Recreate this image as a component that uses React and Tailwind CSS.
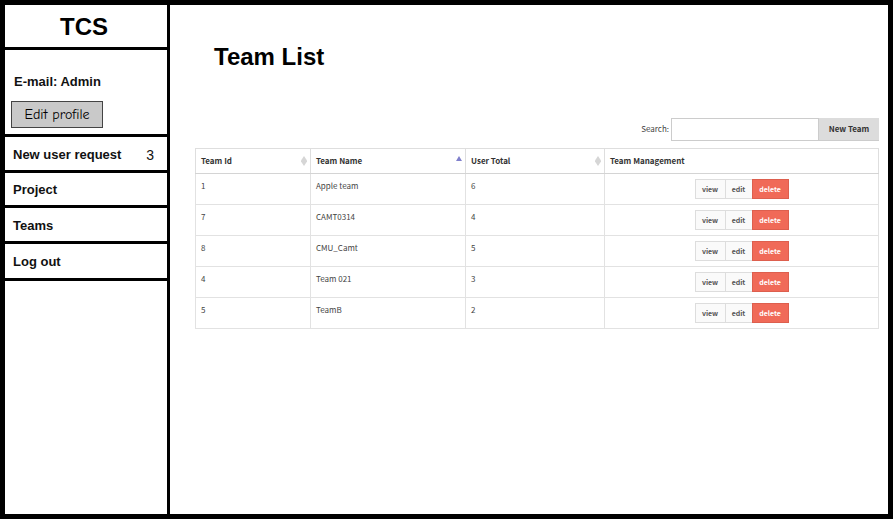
import React from "react";

const teams = [
  { id: 1, name: "Apple team", total: 6 },
  { id: 7, name: "CAMT0314", total: 4 },
  { id: 8, name: "CMU_Camt", total: 5 },
  { id: 4, name: "Team 021", total: 3 },
  { id: 5, name: "TeamB", total: 2 },
];

const links = [
  { label: "New user request", count: 3, height: "h-9" },
  { label: "Project", height: "h-[35px]" },
  { label: "Teams", height: "h-9" },
  { label: "Log out", height: "h-[37px]" },
];

function SortIcon({ active }) {
  return (
    <svg viewBox="0 0 6 10" className="h-[10px] w-[6px]" aria-hidden="true">
      {active ? (
        <path d="M3 0 6 5H0Z" fill="#8080cc" />
      ) : (
        <path d="M3 0 6 4.6 V5.4L3 10 0 5.4V4.6Z" fill="#d6d6d6" />
      )}
    </svg>
  );
}

function HeaderCell({ label, width, sort }) {
  return (
    <th scope="col" className={`${width} h-[25px] border border-[#dedede] border-b-[#d4d4d4] pr-[3px] pl-[5px] text-left font-bold text-[#333]`}>
      <div className="flex items-center justify-between">
        {label}
        {sort && <SortIcon active={sort === "asc"} />}
      </div>
    </th>
  );
}

function Sidebar() {
  return (
    <aside className="w-[165px] shrink-0 border-r-3 border-black text-[13px] font-bold text-[#111]">
      <div className="flex h-[45px] items-center justify-center border-b-3 border-black pt-[2px] pr-1 text-2xl text-black">TCS</div>
      <div className="flex h-[87px] flex-col items-start justify-end gap-[11px] border-b-3 border-black px-[6px] pb-[6px]">
        <p className="px-[3px] leading-4">E-mail: Admin</p>
        <button type="button" className="h-[27px] w-[92px] border border-[#444] bg-[#c9c9c9] font-['Comic_Sans_MS','Comic_Neue','Lato',cursive] text-sm font-normal text-black">
          Edit profile
        </button>
      </div>
      <nav>
        {links.map((link) => (
          <a key={link.label} href="#" className={`${link.height} flex items-center justify-between border-b-3 border-black pt-[2px] pr-[13px] pl-2`}>
            {link.label}
            {link.count && <span className="text-sm font-normal">{link.count}</span>}
          </a>
        ))}
      </nav>
    </aside>
  );
}

export default function App() {
  return (
    <div className="flex min-h-screen border-5 border-black bg-white font-['Liberation_Sans',Arial,sans-serif]">
      <Sidebar />
      <main className="min-w-0 flex-1 pt-9 pr-[9px] pl-[25px]">
        <h1 className="pl-[19px] text-2xl leading-8 font-bold text-black">Team List</h1>
        <div className="mt-[45px] font-['Source_Sans_Pro','Noto_Sans_CJK_SC',sans-serif] text-[8px] leading-3 text-[#444]">
          <div className="flex justify-end">
            <label htmlFor="search" className="pt-[5px] pr-[2px]">Search:</label>
            <input id="search" type="text" className="h-[23px] w-[148px] border border-[#ccc] bg-white px-1 outline-none" />
            <button type="button" className="h-[23px] w-[60px] border-b border-[#ccc] bg-[#dcdcdc] font-bold text-[#333]">
              New Team
            </button>
          </div>
          <table className="mt-[7px] w-full table-fixed border-collapse">
            <thead>
              <tr>
                <HeaderCell label="Team Id" width="w-[115px]" sort="none" />
                <HeaderCell label="Team Name" width="w-[155px]" sort="asc" />
                <HeaderCell label="User Total" width="w-[139px]" sort="none" />
                <HeaderCell label="Team Management" width="w-auto" />
              </tr>
            </thead>
            <tbody>
              {teams.map((team) => (
                <tr key={team.id} className="h-[31px] align-top">
                  <td className="border border-[#e2e2e2] px-[5px] pt-[6px]">{team.id}</td>
                  <td className="border border-[#e2e2e2] px-[5px] pt-[6px]">{team.name}</td>
                  <td className="border border-[#e2e2e2] px-[5px] pt-[6px]">{team.total}</td>
                  <td className="border border-[#e2e2e2] pt-[5px]">
                    <div className="flex justify-center text-[7px] font-bold text-[#555]">
                      <button type="button" className="h-5 w-[31px] border border-[#ddd] bg-[#fafafa]">view</button>
                      <button type="button" className="h-5 w-[26px] border-y border-[#ddd] bg-[#fafafa]">edit</button>
                      <button type="button" className="h-5 w-[37px] border border-[#dd5f4e] bg-[#f06a58] text-white">delete</button>
                    </div>
                  </td>
                </tr>
              ))}
            </tbody>
          </table>
        </div>
      </main>
    </div>
  );
}
